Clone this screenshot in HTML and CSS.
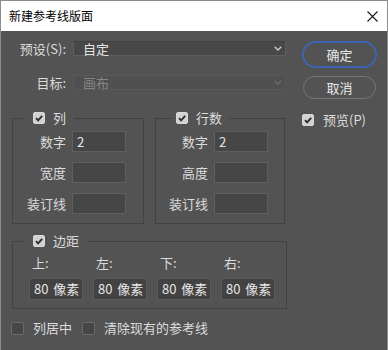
FILE: index.html
```html
<!DOCTYPE html>
<html lang="zh-CN">
<head>
<meta charset="utf-8">
<title>新建参考线版面</title>
<link rel="stylesheet" href="styles.css">
</head>
<body>
<div class="window">
  <div class="titlebar">
    <span class="title">新建参考线版面</span>
    <svg class="close" width="11" height="11" viewBox="0 0 11 11"><path d="M0.5 0.5 L10.5 10.5 M10.5 0.5 L0.5 10.5" stroke="#1a1a1a" stroke-width="1.1" fill="none"/></svg>
  </div>
  <div class="main">
    <div class="left">
      <div class="field-row">
        <span class="flabel">预设(S):</span>
        <div class="select"><span>自定</span><svg class="chev" width="8" height="5" viewBox="0 0 8 5"><path d="M0.7 0.7 L4 4 L7.3 0.7" stroke="#cfcfcf" stroke-width="1.3" fill="none"/></svg></div>
      </div>
      <div class="field-row r2">
        <span class="flabel">目标:</span>
        <div class="select disabled"><span>画布</span><svg class="chev" width="8" height="5" viewBox="0 0 8 5"><path d="M0.7 0.7 L4 4 L7.3 0.7" stroke="#6c6c6c" stroke-width="1.3" fill="none"/></svg></div>
      </div>
      <div class="groups">
        <fieldset class="group g1">
          <legend class="lg1"><span class="lgc"><span class="box checked"><svg width="12" height="12" viewBox="0 0 12 12"><path d="M3 6.2 L5.1 8.3 L9.2 3.9" stroke="#2e2e2e" stroke-width="1.9" fill="none"/></svg></span><span>列</span></span></legend>
          <div class="ginner">
            <span class="glabel">数字</span><div class="inp">2</div>
            <span class="glabel">宽度</span><div class="inp"></div>
            <span class="glabel">装订线</span><div class="inp"></div>
          </div>
        </fieldset>
        <fieldset class="group g2">
          <legend class="lg2"><span class="lgc"><span class="box checked"><svg width="12" height="12" viewBox="0 0 12 12"><path d="M3 6.2 L5.1 8.3 L9.2 3.9" stroke="#2e2e2e" stroke-width="1.9" fill="none"/></svg></span><span>行数</span></span></legend>
          <div class="ginner">
            <span class="glabel">数字</span><div class="inp">2</div>
            <span class="glabel">高度</span><div class="inp"></div>
            <span class="glabel">装订线</span><div class="inp"></div>
          </div>
        </fieldset>
      </div>
      <fieldset class="group margins">
        <legend class="lg1"><span class="lgc"><span class="box checked"><svg width="12" height="12" viewBox="0 0 12 12"><path d="M3 6.2 L5.1 8.3 L9.2 3.9" stroke="#2e2e2e" stroke-width="1.9" fill="none"/></svg></span><span>边距</span></span></legend>
        <div class="mgrid">
          <span class="mlabel">上:</span>
          <span class="mlabel">左:</span>
          <span class="mlabel">下:</span>
          <span class="mlabel">右:</span>
          <div class="inp minp">80 像素</div>
          <div class="inp minp">80 像素</div>
          <div class="inp minp">80 像素</div>
          <div class="inp minp">80 像素</div>
        </div>
      </fieldset>
    </div>
    <div class="right">
      <button class="btn primary">确定</button>
      <button class="btn">取消</button>
      <div class="check preview"><span class="box checked"><svg width="12" height="12" viewBox="0 0 12 12"><path d="M3 6.2 L5.1 8.3 L9.2 3.9" stroke="#2e2e2e" stroke-width="1.9" fill="none"/></svg></span><span>预览(P)</span></div>
    </div>
  </div>
  <div class="bottom">
    <div class="check"><span class="box"></span><span>列居中</span></div>
    <div class="check"><span class="box"></span><span>清除现有的参考线</span></div>
  </div>
</div>
</body>
</html>
```
FILE: styles.css
```css
html, body {
  margin: 0;
  padding: 0;
  background: #535353;
}
body {
  font-family: "Noto Sans CJK SC", "Noto Sans", sans-serif;
  font-size: 13px;
  color: #dcdcdc;
}
.window {
  width: 388px;
  height: 350px;
  box-sizing: border-box;
  border: 1px solid #8c8c8c;
  border-bottom: none;
  background: #535353;
  overflow: hidden;
}
.titlebar {
  height: 30px;
  background: #ffffff;
  display: flex;
  align-items: center;
  justify-content: space-between;
  padding: 0 9px 0 8px;
}
.title {
  font-size: 12px;
  color: #000;
  line-height: 14px;
}
.close {
  display: block;
}
.main {
  display: flex;
  padding: 10px 0 0 11px;
  gap: 15px;
}
.left {
  width: 275px;
}
.field-row {
  display: flex;
  align-items: center;
  height: 15px;
}
.r2 {
  margin-top: 19px;
}
.flabel {
  width: 54px;
  margin-right: 7px;
  text-align: right;
  line-height: 15px;
  white-space: nowrap;
}
.select {
  width: 213px;
  height: 15px;
  box-sizing: border-box;
  background: #484848;
  border: 1px solid #5e5e5e;
  border-top-color: #404040;
  display: flex;
  align-items: center;
  justify-content: space-between;
  padding: 0 3px 0 9px;
  line-height: 13px;
  color: #e4e4e4;
}
.select.disabled {
  background: #505050;
  border-color: #595959;
  color: #858585;
}
.chev {
  display: block;
}
.groups {
  display: grid;
  grid-template-columns: 132px 130px;
  column-gap: 11px;
  margin-top: 21px;
}
.group {
  margin: 0;
  padding: 0;
  min-width: 0;
  border: 1px solid #424242;
}
legend {
  line-height: 14px;
  padding: 0 8px 0 10px;
  margin-left: 10px;
}
.lg2 {
  margin-left: 16px;
  padding-left: 4px;
}
.lgc {
  display: flex;
  align-items: center;
  gap: 8px;
  height: 14px;
}
.box {
  width: 12px;
  height: 12px;
  box-sizing: border-box;
  border-radius: 2px;
  background: #464646;
  border: 1px solid #6a6a6a;
  display: block;
  flex: none;
}
.box.checked {
  background: #d2d2d2;
  border-color: #d9d9d9;
}
.box svg {
  display: block;
  margin: -1px;
}
.ginner {
  display: grid;
  grid-template-columns: 1fr 54px;
  column-gap: 6px;
  row-gap: 10px;
  align-items: center;
  padding: 6px 17px 9px 0;
}
.g2 .ginner {
  padding-right: 16px;
}
.glabel {
  text-align: right;
  white-space: nowrap;
  line-height: 14px;
}
.inp {
  height: 21px;
  box-sizing: border-box;
  background: #464646;
  border: 1px solid #5f5f5f;
  padding-left: 4px;
  line-height: 19px;
  color: #e6e6e6;
  white-space: nowrap;
}
.margins {
  margin-top: 10px;
}
.mgrid {
  display: grid;
  grid-template-columns: repeat(4, 54px);
  column-gap: 10px;
  row-gap: 8px;
  padding: 8px 0 8px 16px;
}
.mlabel {
  padding-left: 3px;
  line-height: 14px;
}
.minp {
  height: 22px;
  line-height: 20px;
  background: #424242;
  border-color: #5a5a5a;
  word-spacing: 2px;
}
.right {
  width: 75px;
  display: flex;
  flex-direction: column;
  align-items: flex-start;
}
.btn {
  font: inherit;
  font-size: 13px;
  color: #e8e8e8;
  background: transparent;
  border: 1px solid #767676;
  border-radius: 12px;
  width: 73px;
  height: 23px;
  margin: 8px 0 0 1px;
  padding: 0;
  line-height: 20px;
}
.btn.primary {
  width: 75px;
  height: 27px;
  margin: 0;
  border: 2px solid #3d64b4;
  border-radius: 14px;
}
.check {
  display: flex;
  align-items: center;
  gap: 9px;
  line-height: 14px;
  white-space: nowrap;
}
.preview {
  margin-top: 14px;
  gap: 9px;
}
.bottom {
  display: flex;
  gap: 10px;
  padding: 12px 0 0 10px;
}
.bottom .box {
  width: 13px;
  height: 13px;
}
```
